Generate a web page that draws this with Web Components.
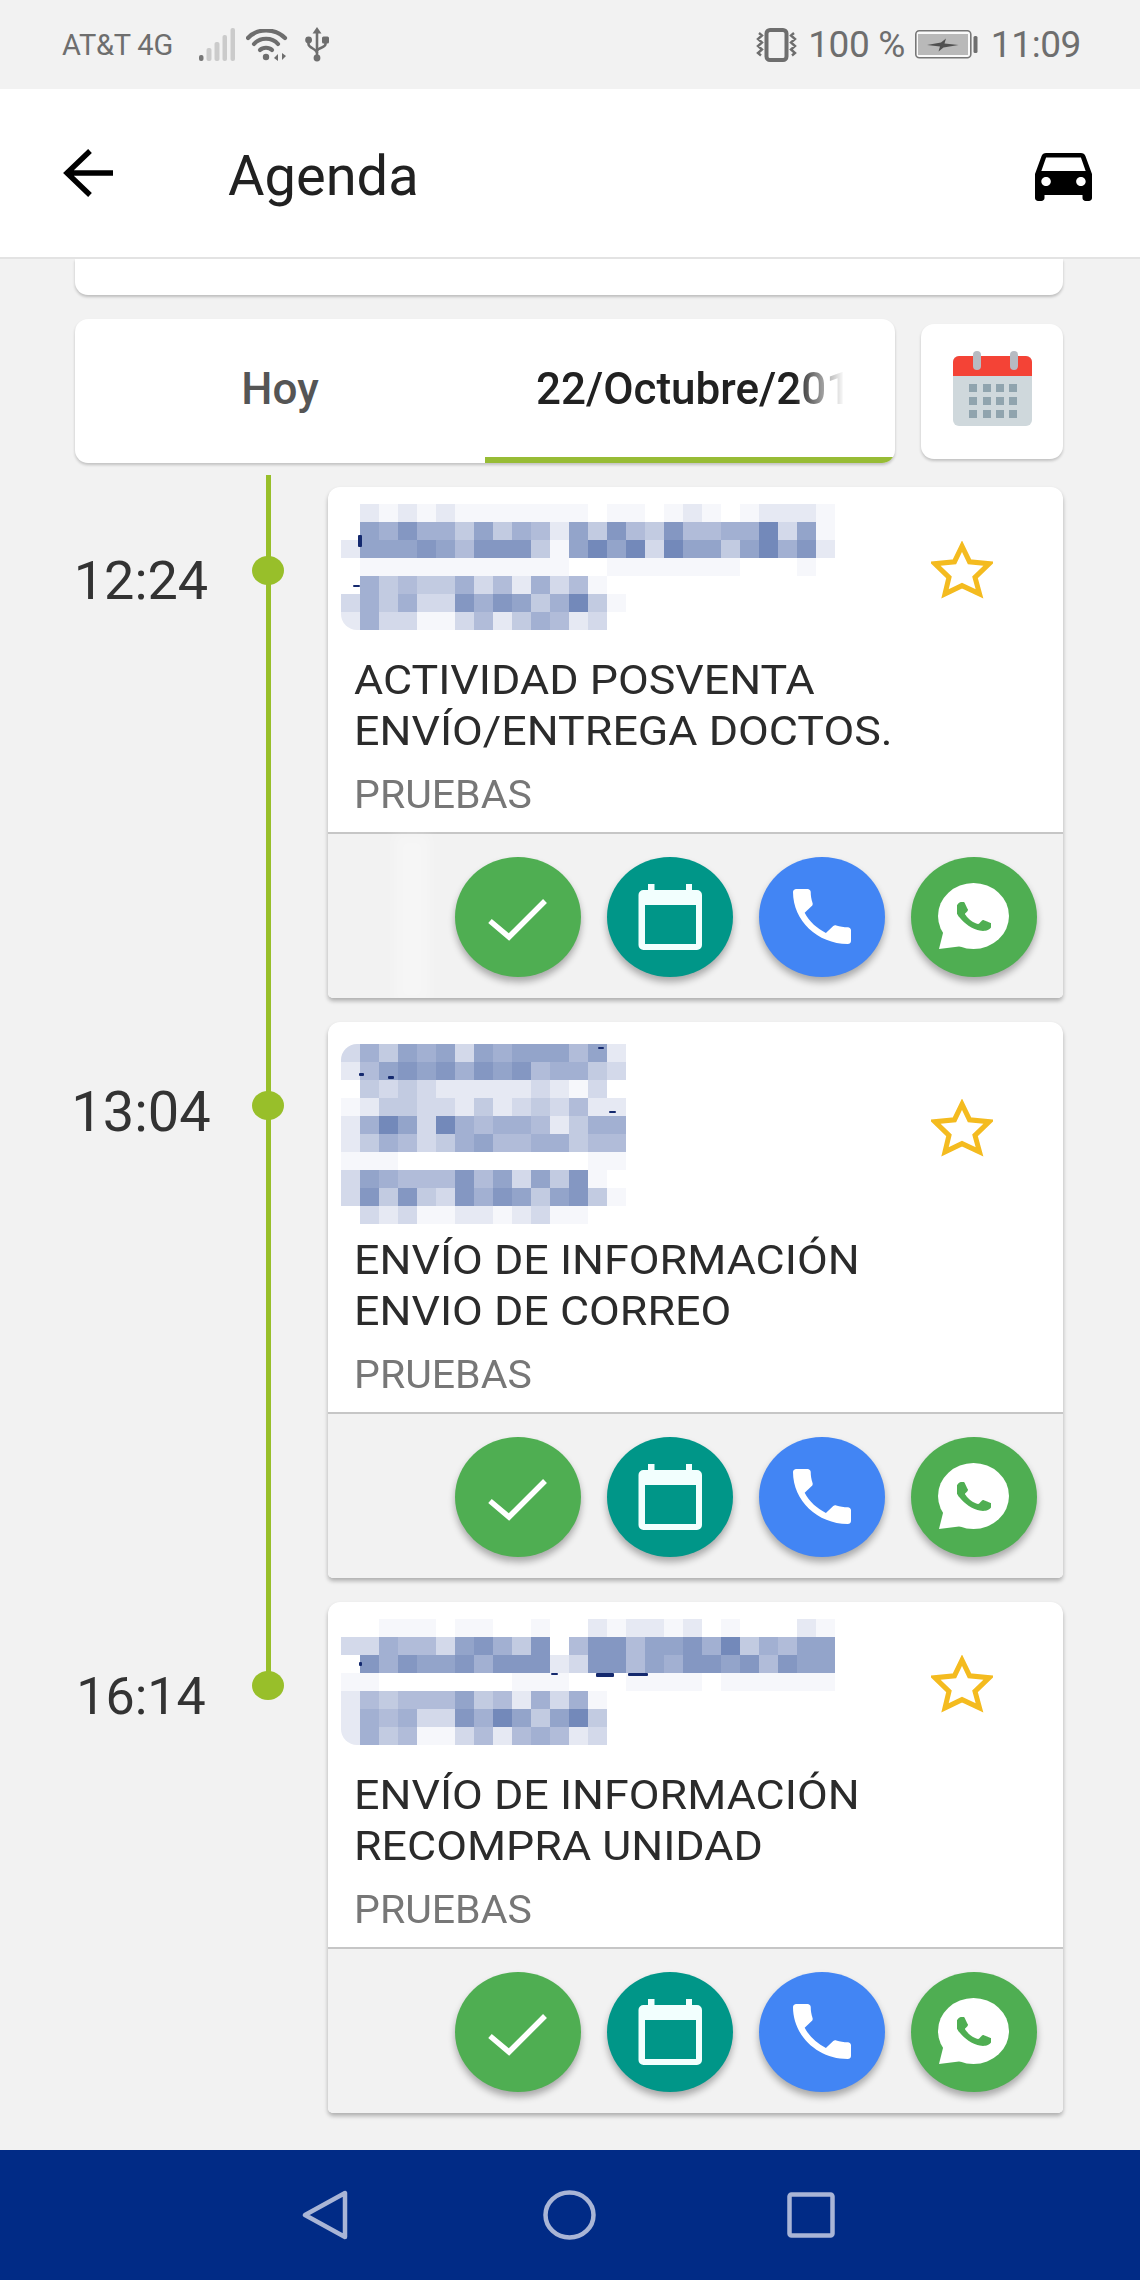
<!doctype html>
<html lang="es">
<head>
<meta charset="utf-8">
<title>Agenda</title>
<style>
  html,body{margin:0;padding:0}
  body{width:1140px;height:2280px;overflow:hidden;background:#f2f2f2;font-family:Roboto,"Noto Sans",sans-serif;display:flex;flex-direction:column}
  .content{flex:1;min-height:0;display:flex;flex-direction:column;gap:24px;padding:0 77px 0 75px}
</style>
</head>
<body>
<status-bar></status-bar>
<app-header title="Agenda"></app-header>
<div class="content">
  <stub-card></stub-card>
  <agenda-tabs today="Hoy" date="22/Octubre/201"></agenda-tabs>
  <agenda-list>
    <agenda-item time="12:24" tsize="54" height="345" pad="17" star="83" tshift="19" smear>
      <pixel-mosaic cols="26" specks="17,31,4,12;12,81,7,2" rows="02121211111110110121012221|07686647465274854855669371|27778758884179793977479682|01111111111100111111100010|06454463526351000000000000|36463386874694100000000000|26331135246523000000000000"></pixel-mosaic>
      <span slot="title">ACTIVIDAD POSVENTA<br>ENVÍO/ENTREGA DOCTOS.</span>
      <span slot="tag">PRUEBAS</span>
    </agenda-item>
    <agenda-item time="13:04" tsize="56" height="390" pad="22" star="106" tshift="13">
      <pixel-mosaic cols="15" specks="18,29,5,3;47,32,6,3;257,3,6,2;268,67,7,2" rows="364767376777572|257878687856643|043432222232130|124433242343522|269739656652466|246534675566455|111000000000011|376555857374810|384843868747841|032311221231100"></pixel-mosaic>
      <span slot="title">ENVÍO DE INFORMACIÓN<br>ENVIO DE CORREO</span>
      <span slot="tag">PRUEBAS</span>
    </agenda-item>
    <agenda-item time="16:14" tsize="52" height="345" pad="17" star="82" tshift="21" last>
      <pixel-mosaic cols="26" specks="18,43,3,4;210,54,7,2;255,54,18,4;287,54,20,3" rows="00111011001002122120100021|33655378648058857786946577|08687786888238857688785877|11000000011100011110111111|25455574526361000000000000|26563386974794000000000000|26451135256523000000000000"></pixel-mosaic>
      <span slot="title">ENVÍO DE INFORMACIÓN<br>RECOMPRA UNIDAD</span>
      <span slot="tag">PRUEBAS</span>
    </agenda-item>
  </agenda-list>
</div>
<nav-bar></nav-bar>

<script>
/* status bar: carrier + system glyphs on the left, battery + clock on the right */
class StatusBar extends HTMLElement {
  connectedCallback() {
    if (this.shadowRoot) return;
    this.attachShadow({ mode: "open" });
    this.shadowRoot.innerHTML = `
      <style>
        :host{display:flex;align-items:center;justify-content:space-between;height:89px;background:#f2f2f2;color:#6e6e6e;font-family:Roboto,sans-serif;flex:none}
        .l,.r{display:flex;align-items:center}
        .l{padding-left:62px}
        .r{padding-right:59px}
        .car{font-size:29px;letter-spacing:-.2px}
        .big{font-size:37px;font-weight:400;letter-spacing:-.4px}
        svg{display:block;flex:none}
      </style>
      <div class="l">
        <span class="car">AT&amp;T 4G</span>
        <svg style="margin-left:26px" width="36" height="33" viewBox="0 0 36 33">
          <rect x="0" y="27" width="4.5" height="6" rx="2" fill="#777"/>
          <rect x="7.5" y="20" width="5" height="13" rx="2" fill="#cbcbcb"/>
          <rect x="15.5" y="14" width="5" height="19" rx="2" fill="#cbcbcb"/>
          <rect x="23.5" y="7" width="4.5" height="26" rx="2" fill="#cbcbcb"/>
          <rect x="31.5" y="0" width="4.5" height="33" rx="2" fill="#cbcbcb"/>
        </svg>
        <svg style="margin-left:11px" width="42" height="32" viewBox="0 0 42 32" fill="none" stroke="#6e6e6e" stroke-width="4.2" stroke-linecap="round">
          <path d="M2 9C11 -1 29 -1 39 9"/>
          <path d="M8 15C14 8 26 8 32 15"/>
          <path d="M14 21C17 18 23 18 26 21"/>
          <circle cx="20" cy="28" r="3.2" fill="#6e6e6e" stroke="none"/>
          <path d="M32 25v7l-4-3zM36 24v7l4-4z" fill="#6e6e6e" stroke="none"/>
        </svg>
        <svg style="margin-left:17px" width="24" height="35" viewBox="0 0 24 35" fill="none" stroke="#6e6e6e" stroke-width="2.6">
          <path d="M12 4V30"/>
          <path d="M12 0l4.5 6.5h-9z" fill="#6e6e6e" stroke="none"/>
          <circle cx="12" cy="31" r="3.4" fill="#6e6e6e" stroke="none"/>
          <path d="M3.5 14v3c0 4 8.5 5 8.5 9M20.5 14v3c0 4-8.5 4-8.5 7"/>
          <circle cx="3.6" cy="13" r="3.4" fill="#6e6e6e" stroke="none"/>
          <rect x="17" y="9.5" width="7" height="7" rx="1.5" fill="#6e6e6e" stroke="none"/>
        </svg>
      </div>
      <div class="r">
        <svg width="45" height="34" viewBox="0 0 45 34" fill="none" stroke="#6e6e6e">
          <rect x="12.5" y="2" width="20" height="30" rx="3.5" stroke-width="4"/>
          <path d="M5 5l3 2.500-4 3.500 4 3.500-4 3.500 4 3.500-4 3.500 3 2.500M40 5l-3 2.500 4 3.500-4 3.500 4 3.500-4 3.500 4 3.500-3 2.500" stroke-width="2.4"/>
        </svg>
        <span class="big" style="margin-left:9px">100 %</span>
        <svg style="margin-left:10px" width="63" height="29" viewBox="0 0 63 29">
          <rect x=".8" y=".8" width="55" height="27" rx="3.5" fill="#fafafa" stroke="#777" stroke-width="1.6"/>
          <rect x="3" y="4" width="50" height="21" fill="#b9b9b9"/>
          <path d="M12 15l14-2.500 5-4-1.500 5 14 1.500-15 2.500-5 4 1.500-5z" fill="#505050"/>
          <rect x="58.5" y="6" width="4" height="17" rx="1.500" fill="#6e6e6e"/>
        </svg>
        <span class="big" style="margin-left:13px">11:09</span>
      </div>`;
  }
}
customElements.define("status-bar", StatusBar);

class AppHeader extends HTMLElement {
  connectedCallback() {
    if (this.shadowRoot) return;
    this.attachShadow({ mode: "open" });
    this.shadowRoot.innerHTML = `
      <style>
        :host{display:flex;align-items:center;height:168px;background:#fff;border-bottom:2px solid #e3e3e3;flex:none;position:relative;z-index:2;font-family:Roboto,sans-serif}
        .back{margin-left:63px;display:block}
        h1{margin:6px 0 0 115px;font-size:56px;font-weight:400;color:#212121;letter-spacing:0;line-height:60px}
        .car{margin:8px 48px 0 auto;display:block}
      </style>
      <svg class="back" width="50" height="48" viewBox="0 0 50 48" fill="none" stroke="#000" stroke-width="5.4">
        <path d="M50 24H4M27 2L4 24l23 22"/>
      </svg>
      <h1>${this.getAttribute("title") || ""}</h1>
      <svg class="car" width="57" height="48" viewBox="3 5 18 16" preserveAspectRatio="none">
        <path fill="#000" d="M18.92 6.01C18.72 5.42 18.16 5 17.5 5h-11c-.66 0-1.21.42-1.42 1.01L3 12v8c0 .55.45 1 1 1h1c.55 0 1-.45 1-1v-1h12v1c0 .55.45 1 1 1h1c.55 0 1-.45 1-1v-8l-2.08-5.99zM6.5 16c-.83 0-1.5-.67-1.5-1.5S5.67 13 6.5 13s1.5.67 1.5 1.5S7.33 16 6.5 16zm11 0c-.83 0-1.5-.67-1.5-1.5s.67-1.5 1.5-1.5 1.5.67 1.5 1.5-.67 1.5-1.5 1.5zM5 11l1.5-4.5h11L19 11H5z"/>
      </svg>`;
  }
}
customElements.define("app-header", AppHeader);

/* bottom edge of the card scrolled away under the header */
class StubCard extends HTMLElement {
  connectedCallback() {
    if (this.shadowRoot) return;
    this.attachShadow({ mode: "open" });
    this.shadowRoot.innerHTML = `<style>:host{display:block;height:36px;flex:none;background:#fff;border-radius:0 0 13px 13px;box-shadow:0 2px 3px rgba(0,0,0,.22)}</style>`;
  }
}
customElements.define("stub-card", StubCard);

class AgendaTabs extends HTMLElement {
  connectedCallback() {
    if (this.shadowRoot) return;
    this.attachShadow({ mode: "open" });
    this.shadowRoot.innerHTML = `
      <style>
        :host{display:flex;align-items:center;gap:26px;flex:none;font-family:Roboto,sans-serif}
        .tabs{width:820px;height:144px;display:grid;grid-template-columns:410px 410px;background:#fff;border-radius:13px;box-shadow:0 2px 3px rgba(0,0,0,.2);overflow:hidden}
        .tab{display:flex;align-items:center;font-size:44px;font-weight:500;box-sizing:border-box}
        .hoy{justify-content:center;color:#555;padding-bottom:4px}
        .sel{border-bottom:6px solid #97bc35;padding:2px 0 0 51px;color:#212121}
        .sel span{display:block;white-space:nowrap;-webkit-mask-image:linear-gradient(90deg,#000 82%,transparent 98%);mask-image:linear-gradient(90deg,#000 82%,transparent 98%)}
        .cal{width:142px;height:135px;box-sizing:border-box;padding-bottom:6px;background:#fff;border-radius:13px;box-shadow:0 2px 3px rgba(0,0,0,.2);display:flex;align-items:center;justify-content:center}
        svg{display:block}
      </style>
      <div class="tabs">
        <div class="tab hoy">${this.getAttribute("today")}</div>
        <div class="tab sel"><span>${this.getAttribute("date")}</span></div>
      </div>
      <div class="cal">
        <svg width="79" height="75" viewBox="0 0 79 75">
          <rect x="0" y="5" width="79" height="70" rx="6" fill="#cfd8dc"/>
          <path d="M0 25V11a6 6 0 0 1 6-6h67a6 6 0 0 1 6 6v14z" fill="#f44336"/>
          <rect x="20" y="0" width="8" height="19" rx="4" fill="#b7bbc2"/>
          <rect x="57" y="0" width="8" height="19" rx="4" fill="#b7bbc2"/>
          <g fill="#90a4ae">
            <rect x="16" y="33" width="8" height="8"/><rect x="30" y="33" width="8" height="8"/><rect x="43" y="33" width="8" height="8"/><rect x="56" y="33" width="8" height="8"/>
            <rect x="16" y="46" width="8" height="8"/><rect x="30" y="46" width="8" height="8"/><rect x="43" y="46" width="8" height="8"/><rect x="56" y="46" width="8" height="8"/>
            <rect x="16" y="59" width="8" height="8"/><rect x="30" y="59" width="8" height="8"/><rect x="43" y="59" width="8" height="8"/><rect x="56" y="59" width="8" height="8"/>
          </g>
        </svg>
      </div>`;
  }
}
customElements.define("agenda-tabs", AgendaTabs);

class AgendaList extends HTMLElement {
  connectedCallback() {
    if (this.shadowRoot) return;
    this.attachShadow({ mode: "open" });
    this.shadowRoot.innerHTML = `<style>:host{display:flex;flex-direction:column;gap:24px;flex:none}</style><slot></slot>`;
  }
}
customElements.define("agenda-list", AgendaList);

/* blurred-out client name: rows of digits, 0 = white, 9 = darkest blue */
class PixelMosaic extends HTMLElement {
  connectedCallback() {
    if (this.shadowRoot) return;
    const ramp = ["#ffffff","#f6f7fb","#e6e9f3","#d3d9ea","#c2cbe1","#b1bcd9","#a2b0d2","#93a4ca","#8497c2","#7389ba"];
    const cols = +this.getAttribute("cols");
    const rows = this.getAttribute("rows").split("|");
    const cells = rows.map((r) => [...r].map((c) => `<i style="background:${ramp[+c]}"></i>`).join("")).join("");
    const specks = (this.getAttribute("specks") || "").split(";").filter(Boolean).map((s) => {
      const [x, y, w, h] = s.split(",");
      return `<b style="left:${x}px;top:${y}px;width:${w}px;height:${h}px"></b>`;
    }).join("");
    this.attachShadow({ mode: "open" });
    this.shadowRoot.innerHTML = `
      <style>
        :host{display:grid;grid-template-columns:repeat(${cols},19px);grid-auto-rows:18px;width:max-content;position:relative;border-radius:16px 0 0 16px;overflow:hidden}
        i{display:block}
        b{position:absolute;background:#14296e;border-radius:1px}
      </style>${cells}${specks}`;
  }
}
customElements.define("pixel-mosaic", PixelMosaic);

class RoundAction extends HTMLElement {
  connectedCallback() {
    if (this.shadowRoot) return;
    const icons = {
      done: `<polyline points="35,64 54,80 90,44" fill="none" stroke="#fff" stroke-width="5.5"/>`,
      event: `<path fill="#f2fffe" fill-rule="evenodd" d="M41 27h6.500v6H79v-6h6v6h5a5 5 0 0 1 5 5v50a5 5 0 0 1-5 5H36.500a5 5 0 0 1-5-5V38a5 5 0 0 1 5-5H41zM38 48v39h51V48z"/>`,
      call: `<svg x="34" y="32" width="58" height="55" viewBox="3 3 18 18" preserveAspectRatio="none"><path fill="#fff" d="M6.620 10.790c1.440 2.830 3.760 5.140 6.590 6.590l2.200-2.200c.270-.270.670-.360 1.020-.240 1.120.370 2.330.570 3.570.570.550 0 1 .450 1 1V20c0 .550-.450 1-1 1-9.390 0-17-7.610-17-17 0-.550.450-1 1-1h3.500c.550 0 1 .450 1 1 0 1.250.200 2.450.570 3.570.110.350.030.740-.250 1.020l-2.200 2.200z"/></svg>`,
      chat: `<ellipse cx="62.500" cy="59" rx="35.500" ry="33" fill="#fff"/><path d="M28 92l6-24 18 21z" fill="#fff"/>
             <svg x="46" y="44" width="34" height="31" viewBox="6.400 6 11.400 12" preserveAspectRatio="none"><path fill="#4fae52" d="M17.472 14.382c-.297-.149-1.758-.867-2.030-.967-.273-.099-.471-.148-.670.150-.197.297-.767.966-.940 1.164-.173.199-.347.223-.644.075-.297-.150-1.255-.463-2.390-1.475-.883-.788-1.480-1.761-1.653-2.059-.173-.297-.018-.458.130-.606.134-.133.298-.347.446-.520.149-.174.198-.298.298-.497.099-.198.050-.371-.025-.520-.075-.149-.669-1.612-.916-2.207-.242-.579-.487-.500-.669-.510-.173-.008-.371-.010-.570-.010-.198 0-.520.074-.792.372-.272.297-1.040 1.016-1.040 2.479 0 1.462 1.065 2.875 1.213 3.074.149.198 2.096 3.200 5.077 4.487.709.306 1.262.489 1.694.625.712.227 1.360.195 1.871.118.571-.085 1.758-.719 2.006-1.413.248-.694.248-1.289.173-1.413-.074-.124-.272-.198-.570-.347z"/></svg>`
    };
    this.attachShadow({ mode: "open" });
    this.shadowRoot.innerHTML = `
      <style>
        :host{display:block;width:126px;height:120px;border-radius:50%;background:${this.getAttribute("color")};box-shadow:0 5px 7px rgba(0,0,0,.3)}
        svg{display:block}
      </style>
      <svg width="126" height="120" viewBox="0 0 126 120">${icons[this.getAttribute("icon")]}</svg>`;
  }
}
customElements.define("round-action", RoundAction);

/* one timeline row: rail (time + dot) and the appointment card */
class AgendaItem extends HTMLElement {
  connectedCallback() {
    if (this.shadowRoot) return;
    const h = this.getAttribute("height"), pad = this.getAttribute("pad");
    const star = +this.getAttribute("star"), tshift = this.getAttribute("tshift");
    const last = this.hasAttribute("last");
    this.attachShadow({ mode: "open" });
    this.shadowRoot.innerHTML = `
      <style>
        :host{display:flex;font-family:Roboto,sans-serif}
        .rail{width:253px;flex:none;position:relative}
        .rail::before{content:"";position:absolute;left:191px;width:5px;top:${last ? "0" : "-12px"};${last ? "height:84px" : "bottom:-24px"};background:#98bf2a}
        .stop{display:flex;align-items:center;height:29px;padding-top:69px;margin-left:-6px}
        .time{width:144px;padding-top:${tshift}px;text-align:center;font-size:${this.getAttribute("tsize")}px;color:#333;line-height:29px;white-space:nowrap;flex:none}
        .dot{width:32px;height:29px;border-radius:50%;background:#98bf2a;margin-left:39px;position:relative}
        .card{width:735px;border-radius:12px 12px 5px 5px;background:#fff;box-shadow:0 3px 4px rgba(0,0,0,.28);overflow:hidden;position:relative}
        .body{height:${h - pad}px;padding:${pad}px 13px 0;display:flex;flex-direction:column}
        .text{margin-top:auto;padding:0 12.500px 17.500px}
        .title{font-size:41px;line-height:51px;color:#2b2b2b;margin-bottom:18px;transform:scaleX(1.092);transform-origin:left;white-space:nowrap}
        .tag{font-size:38px;line-height:40px;color:#777;transform:scaleX(1.08);transform-origin:left}
        .star{position:absolute;left:603px;top:${star - 29}px;display:block}
        .smear{position:absolute;left:66px;top:347px;width:36px;height:170px;background:rgba(255,255,255,.3);filter:blur(6px)}
        .actions{height:141px;padding:23px 26px 0;background:#f2f2f2;border-top:2px solid #c6c6c6;display:flex;justify-content:flex-end;gap:26px}
      </style>
      <div class="rail">
        <div class="stop"><div class="time">${this.getAttribute("time")}</div><div class="dot"></div></div>
      </div>
      <div class="card">
        <div class="body">
          <slot></slot>
          <div class="text">
            <div class="title"><slot name="title"></slot></div>
            <div class="tag"><slot name="tag"></slot></div>
          </div>
        </div>
        <svg class="star" width="62" height="58" viewBox="0 0 62 56" preserveAspectRatio="none" fill="none" stroke="#f4bb1f" stroke-width="5">
          <polygon points="31,5 38.500,20 58,22 44,35 48.500,51 31,43 14,51 18,35 4,22 23.500,20"/>
        </svg>
        <div class="actions">
          <round-action color="#4fae52" icon="done"></round-action>
          <round-action color="#009688" icon="event"></round-action>
          <round-action color="#4285f4" icon="call"></round-action>
          <round-action color="#4fae52" icon="chat"></round-action>
        </div>
        ${this.hasAttribute("smear") ? '<div class="smear"></div>' : ""}
      </div>`;
  }
}
customElements.define("agenda-item", AgendaItem);

class NavBar extends HTMLElement {
  connectedCallback() {
    if (this.shadowRoot) return;
    this.attachShadow({ mode: "open" });
    this.shadowRoot.innerHTML = `
      <style>
        :host{display:flex;align-items:center;height:130px;background:#012b86;flex:none;padding-left:302px}
        svg{display:block;flex:none}
      </style>
      <svg width="46" height="50" viewBox="0 0 46 50" fill="none" stroke="#a9b5d6" stroke-width="4.500" stroke-linejoin="round">
        <path d="M43 3V47L3 25z"/>
      </svg>
      <svg style="margin-left:195px" width="53" height="50" viewBox="0 0 53 50" fill="none" stroke="#a9b5d6" stroke-width="4.500">
        <ellipse cx="26.500" cy="25" rx="24" ry="22.500"/>
      </svg>
      <svg style="margin-left:191px" width="48" height="46" viewBox="0 0 48 46" fill="none" stroke="#a9b5d6" stroke-width="4.500" stroke-linejoin="round">
        <rect x="2.500" y="2.500" width="43" height="41" rx="2"/>
      </svg>`;
  }
}
customElements.define("nav-bar", NavBar);
</script>
</body>
</html>
